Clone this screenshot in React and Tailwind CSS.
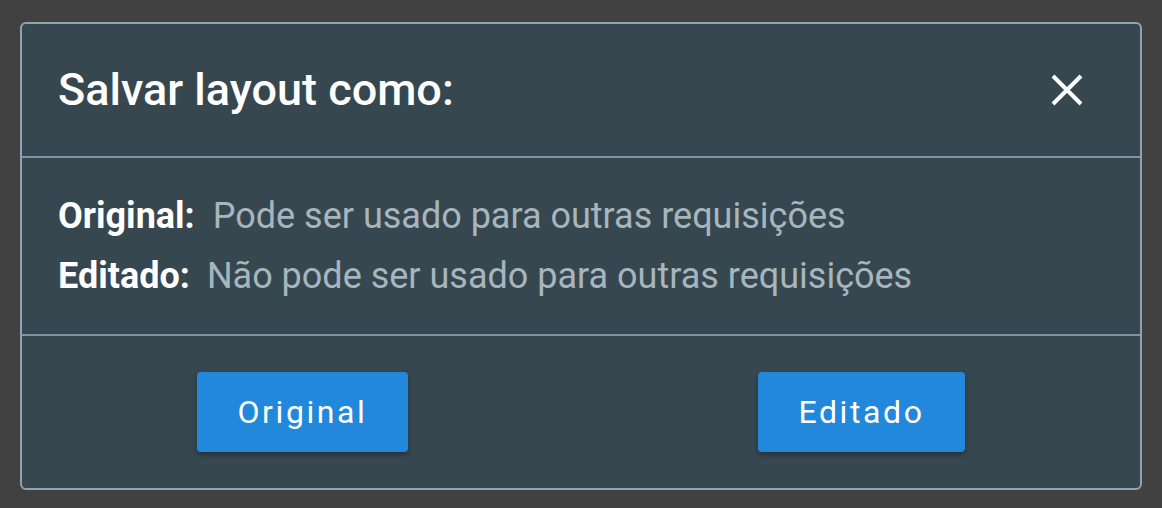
const App = () => {
    return (
        <div className="min-h-screen bg-[#414141] px-5 pt-[22px] pb-[18px] font-['Roboto',sans-serif]">
            <div className="rounded-md border-2 border-[#8fa4ae] bg-[#37474f]">
                <div className="flex h-[132px] items-center justify-between pl-[36px] pr-[56px]">
                    <h2 className="text-[45px] font-medium text-white">Salvar layout como:</h2>
                    <button className="text-white" aria-label="Fechar">
                        <svg width="34" height="34" viewBox="0 0 34 34" fill="none" stroke="currentColor" strokeWidth="4">
                            <path d="M3 3 L31 31 M31 3 L3 31" />
                        </svg>
                    </button>
                </div>
                <div className="h-[2px] bg-[#7f96a1]"></div>
                <div className="flex flex-col px-[36px] py-[28px] text-[36px] leading-[60px]">
                    <p>
                        <span className="font-bold text-white">Original:</span>
                        <span className="ml-[18px] text-[#a7b6be]">Pode ser usado para outras requisições</span>
                    </p>
                    <p>
                        <span className="font-bold text-white">Editado:</span>
                        <span className="ml-[17px] text-[#a7b6be]">Não pode ser usado para outras requisições</span>
                    </p>
                </div>
                <div className="h-[2px] bg-[#7f96a1]"></div>
                <div className="flex justify-around py-[36px]">
                    <button className="h-20 rounded bg-[#2188db] px-[40px] text-[32px] tracking-[2.6px] text-white shadow-[0_3px_5px_rgba(0,0,0,0.3)]">
                        Original
                    </button>
                    <button className="h-20 rounded bg-[#2188db] px-[40px] text-[32px] tracking-[2.6px] text-white shadow-[0_3px_5px_rgba(0,0,0,0.3)]">
                        Editado
                    </button>
                </div>
            </div>
        </div>
    )
}

export default App
